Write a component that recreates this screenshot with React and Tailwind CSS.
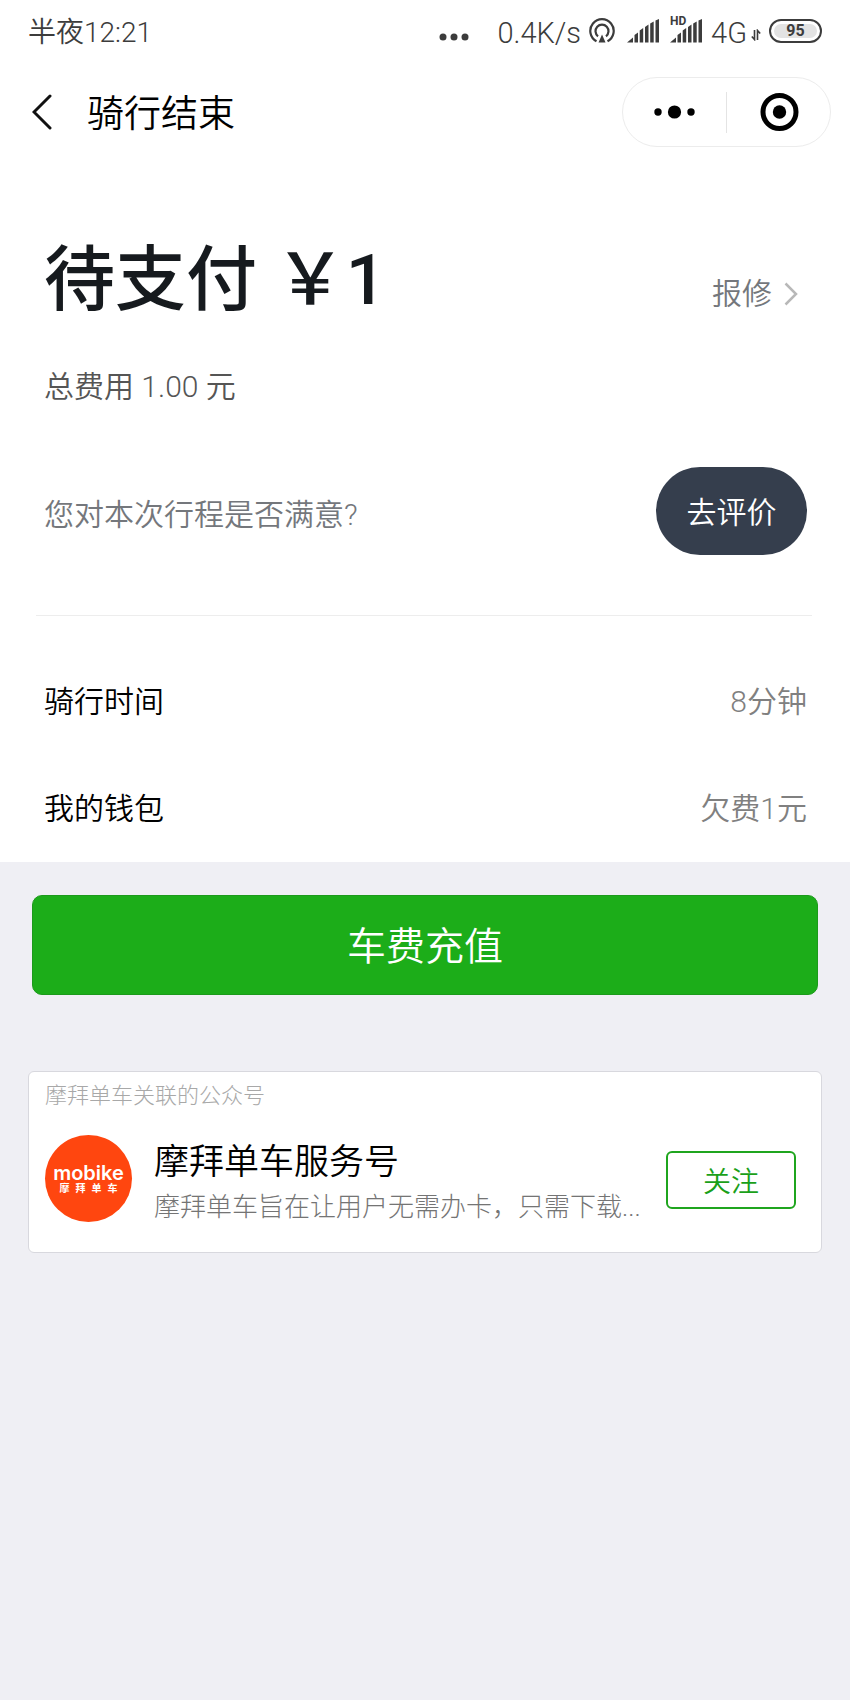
// Rows shown under the fee summary
const details = [
  { label: "骑行时间", value: "8分钟" },
  { label: "我的钱包", value: "欠费1元" },
];

const SignalBars = () => (
  <svg width="33" height="24" viewBox="0 0 33 24" fill="#3c3c3c" aria-hidden="true">
    <path d="M0 23.500L6 18.500V23.500Z" />
    <path d="M7.500 23.500V16L11 13.500V23.500Z" />
    <path d="M12.700 23.500V11.500L16.200 9V23.500Z" />
    <path d="M18 23.500V8L21.500 5.500V23.500Z" />
    <path d="M23.200 23.500V4.500L26.700 2.500V23.500Z" />
    <path d="M28.500 23.500V1.500L32 0V23.500Z" />
  </svg>
);

// Phone status bar: clock on the left, network and battery on the right
const StatusBar = () => (
  <div className="flex h-[62px] items-center justify-between px-7 leading-8 text-[#3c3c3c]">
    <span className="pt-1 text-[28px]">半夜12:21</span>
    <div className="flex items-center text-[29px] font-light">
      <svg className="mt-3 mr-7" width="30" height="8" viewBox="0 0 30 8" fill="#3c3c3c" aria-hidden="true">
        <circle cx="4" cy="4" r="3.500" />
        <circle cx="15" cy="4" r="3.500" />
        <circle cx="26" cy="4" r="3.500" />
      </svg>
      <span className="pt-1">0.4K/s</span>
      <svg className="ml-2" width="26" height="26" viewBox="0 0 26 26" fill="none" stroke="#3c3c3c" strokeWidth="2.200" aria-hidden="true">
        <path d="M7.500 23.200A11.700 11.700 0 1 1 18.500 23.200" />
        <path d="M9 18.300A6.500 6.500 0 1 1 17 18.300" />
        <path d="M13 16.500L16.500 24.500H9.500Z" fill="#3c3c3c" stroke="none" />
      </svg>
      <span className="ml-3">
        <SignalBars />
      </span>
      <span className="relative ml-2.5">
        <SignalBars />
        <span className="absolute -top-1 left-0 text-xs leading-3 font-bold">HD</span>
      </span>
      <span className="ml-2 pt-1">4G</span>
      <svg className="mt-2 ml-1" width="10" height="12" viewBox="0 0 10 12" fill="none" stroke="#3c3c3c" strokeWidth="1.600" aria-hidden="true">
        <path d="M3.500 1V10.500L0.800 7.500" />
        <path d="M6.500 11V1.500L9.200 4.500" />
      </svg>
      <span className="ml-2 flex h-6 w-[53px] rounded-full border-2 border-[#3c3c3c] p-[3px]">
        <span className="flex flex-1 items-center justify-center rounded-full bg-[#e3e3e3] text-base leading-4 font-bold">
          95
        </span>
      </span>
    </div>
  </div>
);

const NavBar = () => (
  <header className="flex h-[100px] items-center pr-[19px] pl-8">
    <button type="button" aria-label="返回" className="mr-[35px]">
      <svg width="20" height="36" viewBox="0 0 20 36" fill="none" stroke="#111" strokeWidth="3" strokeLinecap="round">
        <path d="M18 2L2 18L18 34" />
      </svg>
    </button>
    <h1 className="flex-1 pt-1.5 text-[37px] leading-[48px] text-black">骑行结束</h1>
    <div className="flex h-[70px] w-[209px] items-center rounded-full border border-[#ececec]">
      <button type="button" aria-label="更多" className="flex flex-1 justify-center">
        <svg width="42" height="14" viewBox="0 0 42 14" fill="#000">
          <circle cx="4" cy="7" r="3.700" />
          <circle cx="20.500" cy="7" r="6.600" />
          <circle cx="37" cy="7" r="3.700" />
        </svg>
      </button>
      <span className="h-[41px] w-px bg-[#e4e4e4]" />
      <button type="button" aria-label="关闭" className="flex flex-1 justify-center">
        <svg width="40" height="40" viewBox="0 0 40 40">
          <circle cx="20.500" cy="20" r="16.500" fill="none" stroke="#000" strokeWidth="5" />
          <circle cx="20.500" cy="20" r="6.700" fill="#000" />
        </svg>
      </button>
    </div>
  </header>
);

const MobikeLogo = () => (
  <div className="flex size-[87px] shrink-0 flex-col items-center justify-center rounded-full bg-[#ff460f] text-white">
    <span className="font-[Inter,sans-serif] text-xl leading-5 font-semibold">mobike</span>
    <span className="flex gap-1.5 text-[10px] leading-3 font-bold">
      <span>摩</span>
      <span>拜</span>
      <span>单</span>
      <span>车</span>
    </span>
  </div>
);

const App = () => {
  return (
    <div className="min-h-screen bg-[#efeff4] font-[Roboto,'Noto_Sans_CJK_SC',sans-serif] font-[350]">
      <div className="bg-white">
        <StatusBar />
        <NavBar />

        <main className="pt-20 pr-[38px] pl-9">
          {/* Amount due */}
          <div className="flex items-end justify-between pr-[14px] pl-2">
            <h2 className="text-[71px] leading-[76px] font-medium text-[#161a1e]">{"待支付 \uFFE51"}</h2>
            <a href="#repair" className="flex items-center gap-3 text-[30px] leading-[48px] text-[#74777c]">
              报修
              <svg width="14" height="24" viewBox="0 0 14 24" fill="none" stroke="#b8b8b8" strokeWidth="2.500">
                <path d="M1.500 1.500L12 12L1.500 22.500" />
              </svg>
            </a>
          </div>
          <p className="mt-[49px] pl-2 text-[30px] leading-10 text-[#555]">总费用 1.00 元</p>

          {/* Rating */}
          <div className="mt-[60px] flex items-center justify-between border-b border-[#ededed] pr-[5px] pb-[60px] pl-2">
            <p className="pt-2 text-[30px] leading-10 text-[#74777c]">您对本次行程是否满意?</p>
            <button type="button" className="h-[88px] w-[151px] rounded-full bg-[#353e4d] pt-1 text-[30px] leading-10 text-white">
              去评价
            </button>
          </div>

          <dl className="pt-8 pr-[5px] pl-2">
            {details.map((row) => (
              <div key={row.label} className="flex h-[107px] items-center justify-between text-[30px] leading-10">
                <dt className="text-black">{row.label}</dt>
                <dd className="text-[#808080]">{row.value}</dd>
              </div>
            ))}
          </dl>
        </main>
      </div>

      <div className="px-8 pt-[33px]">
        <button type="button" className="h-[100px] w-full rounded-[10px] border border-[#1c9a1b] bg-[#1cad19] pt-1 text-[39px] leading-[52px] text-white">
          车费充值
        </button>
      </div>

      {/* Linked official account */}
      <section className="mx-7 mt-[76px] rounded-md border border-[#d8d8de] bg-white pt-[9px] pr-[25px] pb-[25px] pl-4">
        <p className="text-[22px] leading-[30px] font-light text-[#a8a8a8]">摩拜单车关联的公众号</p>
        <div className="mt-6 flex items-start">
          <MobikeLogo />
          <div className="ml-[22px] min-w-0 flex-1 pt-1">
            <h3 className="text-[35px] leading-[48px] text-black">摩拜单车服务号</h3>
            <p className="text-[26px] leading-10 font-light whitespace-nowrap text-[#747474]">摩拜单车旨在让用户无需办卡，只需下载...</p>
          </div>
          <button type="button" className="mt-4 h-[58px] w-[130px] rounded-md border-2 border-[#1fa51e] pt-1.5 text-[28px] leading-9 text-[#1aa019]">
            关注
          </button>
        </div>
      </section>
    </div>
  );
};

export default App;
